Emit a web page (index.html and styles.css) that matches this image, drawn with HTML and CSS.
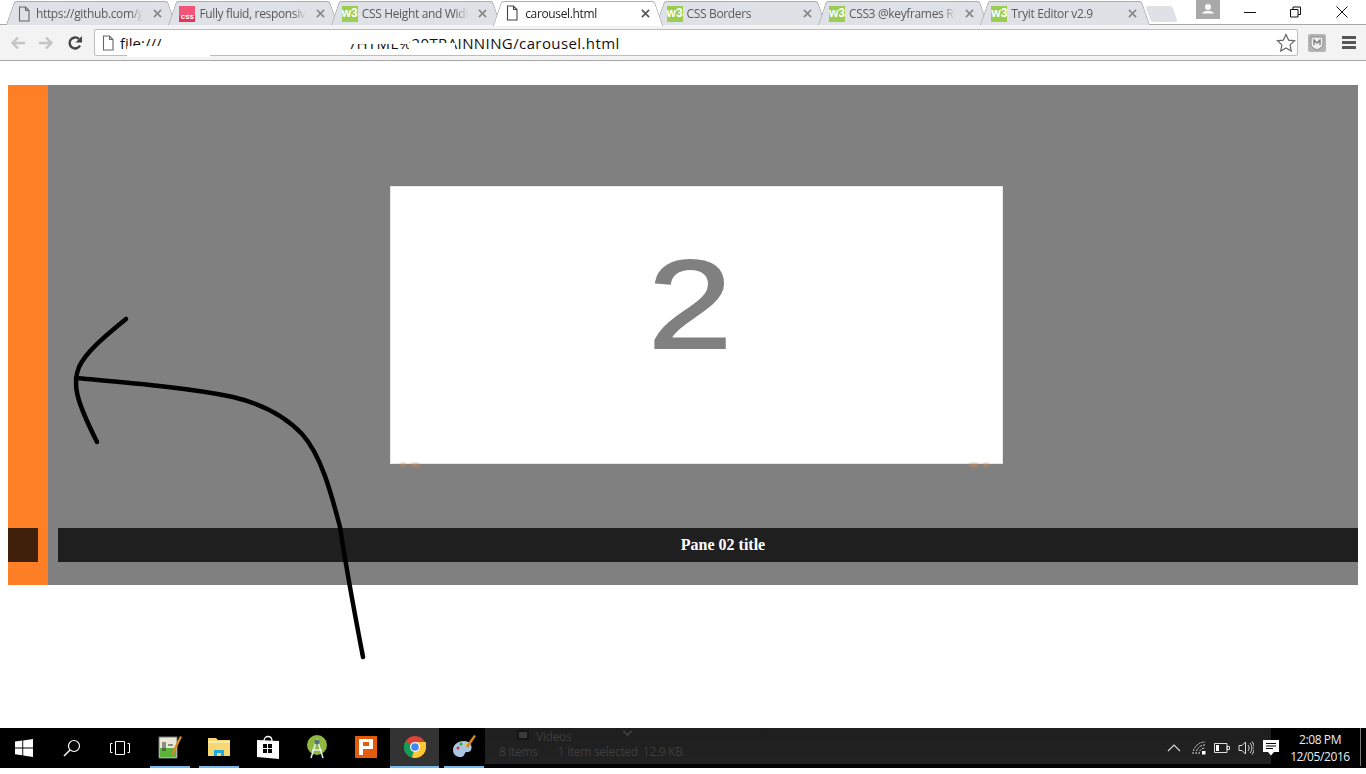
FILE: index.html
```html
<!DOCTYPE html>
<html lang="en">
<head>
<meta charset="utf-8">
<title>carousel.html</title>
<link rel="stylesheet" href="styles.css">
</head>
<body>
<svg class="defs" width="0" height="0" aria-hidden="true">
  <symbol id="file" viewBox="0 0 12 16"><path d="M1.500 1h6l3.500 3.500v10.500h-9.500zM7.500 1v3.500h3.500" fill="none" stroke="currentColor" stroke-width="1.100"/></symbol>
  <symbol id="close" viewBox="0 0 10 10"><path d="M1 1l8 8M9 1l-8 8" fill="none" stroke="currentColor" stroke-width="1.800"/></symbol>
</svg>
<div class="screen">
  <header class="tabstrip">
    <div class="tab"><svg class="fileicon"><use href="#file"/></svg><span class="tabtitle">https://github.com/g</span><svg class="tabclose"><use href="#close"/></svg></div>
    <div class="tab"><span class="favicon csslogo">css</span><span class="tabtitle">Fully fluid, responsive</span><svg class="tabclose"><use href="#close"/></svg></div>
    <div class="tab"><span class="favicon w3">w3</span><span class="tabtitle">CSS Height and Width</span><svg class="tabclose"><use href="#close"/></svg></div>
    <div class="tab active"><svg class="fileicon"><use href="#file"/></svg><span class="tabtitle">carousel.html</span><svg class="tabclose"><use href="#close"/></svg></div>
    <div class="tab"><span class="favicon w3">w3</span><span class="tabtitle">CSS Borders</span><svg class="tabclose"><use href="#close"/></svg></div>
    <div class="tab"><span class="favicon w3">w3</span><span class="tabtitle">CSS3 @keyframes Rule</span><svg class="tabclose"><use href="#close"/></svg></div>
    <div class="tab"><span class="favicon w3">w3</span><span class="tabtitle">Tryit Editor v2.9</span><svg class="tabclose"><use href="#close"/></svg></div>
    <div class="newtab"></div>
    <div class="profile"><svg viewBox="0 0 24 19" width="24" height="19"><circle cx="12" cy="7" r="3" fill="#fff"/><path d="M6 13.500c1-2 3.500-2.500 6-2.500s5 .5 6 2.500z" fill="#fff"/></svg></div>
    <div class="winbtns">
      <div class="winbtn"><svg viewBox="0 0 12 12" width="12" height="12"><path d="M0 6.500h12" stroke="#111" fill="none"/></svg></div>
      <div class="winbtn"><svg viewBox="0 0 12 12" width="12" height="12"><path d="M.5 3.500h7.500v7.500h-7.500zM3 3.500v-2.500h7.500v7.500h-2.500" stroke="#111" fill="none"/></svg></div>
      <div class="winbtn"><svg viewBox="0 0 12 12" width="12" height="12"><path d="M.5 .5l11 11M11.500 .5l-11 11" stroke="#111" fill="none"/></svg></div>
    </div>
  </header>
  <div class="toolbar">
    <svg class="navicon" viewBox="0 0 16 16"><path d="M15 8H3M8 2.500L2.500 8 8 13.500" fill="none" stroke="#c4c4c4" stroke-width="2.400"/></svg>
    <svg class="navicon" viewBox="0 0 16 16"><path d="M1 8h12M8 2.500L13.500 8 8 13.500" fill="none" stroke="#c4c4c4" stroke-width="2.400"/></svg>
    <svg class="navicon reload" viewBox="0 0 16 16"><path d="M13 10.500A5.500 5.500 0 1 1 12 4" fill="none" stroke="#444" stroke-width="2.400"/><path d="M15 1v6.500H8.500z" fill="#444"/></svg>
    <div class="omnibox">
      <svg class="omnifile"><use href="#file"/></svg>
      <span class="url">file:///</span><span class="url urlrest">/HTML%20TRAINNING/carousel.html</span>
      <svg class="star" viewBox="0 0 20 20"><path d="M10 1.500l2.600 5.600 6 .7-4.500 4.100 1.200 6.100-5.300-3-5.300 3 1.200-6.100-4.500-4.100 6-.7z" fill="#fff" stroke="#666" stroke-width="1.200"/></svg>
      <i class="blot blot-a"></i><i class="blot blot-b"></i><i class="blot blot-c"></i><i class="blot blot-d"></i>
    </div>
    <div class="ext"><svg viewBox="0 0 18 18" width="18" height="18"><rect width="18" height="18" rx="2" fill="#b4b4b4"/><path d="M3 3h12v7c0 3-3 4.500-6 6-3-1.500-6-3-6-6z" fill="#eee" stroke="#8a8a8a"/><path d="M6 11V6l3 3 3-3v5" fill="none" stroke="#777" stroke-width="1.300"/></svg></div>
    <div class="menu"><span></span><span></span><span></span></div>
  </div>
  <main class="page">
    <section class="stage">
      <div class="rail"><div class="railthumb"></div></div>
      <div class="pane">
        <div class="slide"><span class="digit">2</span></div>
        <div class="caption">Pane 02 title</div>
      </div>
    </section>
  </main>
  <footer class="taskbar">
    <div class="tb-sys"><svg viewBox="0 0 18 18" width="18" height="18"><path d="M0 2.600L7.300 1.600V8.400H0zM8.200 1.500L18 0V8.400H8.200zM0 9.400H7.300V16.300L0 15.300zM8.200 9.400H18V18L8.200 16.500z" fill="#fff"/></svg></div>
    <div class="tb-sys"><svg viewBox="0 0 18 18" width="18" height="18"><circle cx="11" cy="7" r="5.500" fill="none" stroke="#fff" stroke-width="1.200"/><path d="M7 11l-6 6" stroke="#fff" stroke-width="1.400"/></svg></div>
    <div class="tb-sys"><svg viewBox="0 0 20 14" width="20" height="14"><path d="M5.500 .5h9v13h-9zM2.500 2.500H.5v9h2M17.500 2.500h2v9h-2" fill="none" stroke="#fff"/></svg></div>
    <div class="tb-app run"><svg viewBox="0 0 24 24" width="24" height="24"><rect x="1" y="2" width="18" height="21" fill="#e8e8d8" stroke="#777"/><rect x="2" y="13" width="16" height="9" fill="#5cb33a"/><path d="M5 7v9M7 7v9M10 10h5" stroke="#333" stroke-width="1"/><path d="M22 1l2 1-9 18-2-1z" fill="#d98a1f"/></svg></div>
    <div class="tb-app run"><svg viewBox="0 0 22 20" width="22" height="20"><path d="M0 1h8l2 2h12v16H0z" fill="#f6d873"/><path d="M0 4h22v2H0z" fill="#fbe9a9"/><path d="M6 19v-6h10v6h-3v-3H9v3z" fill="#23a9e1"/></svg></div>
    <div class="tb-app"><svg viewBox="0 0 22 24" width="22" height="24"><path d="M7 6c0-6 8-6 8 0" fill="none" stroke="#fff" stroke-width="1.300"/><path d="M0 5l22 1v18L0 22z" fill="#fff"/><path d="M6 9h4v4H6zM11 9h4v4h-4zM6 14h4v4H6zM11 14h4v4h-4z" fill="#000"/></svg></div>
    <div class="tb-app"><svg viewBox="0 0 22 24" width="22" height="24"><circle cx="11" cy="10" r="10" fill="#8fb93e"/><path d="M11 4L5 23M11 4l6 19M6 15h10" stroke="#e9eef0" stroke-width="1.500" fill="none"/><circle cx="11" cy="7" r="2.500" fill="#55707d"/></svg></div>
    <div class="tb-app"><svg viewBox="0 0 22 22" width="22" height="22"><rect width="22" height="22" fill="#e35c0c"/><path d="M4 3h14v10H8v6H4zM8 6v4h6V6z" fill="#fff" fill-rule="evenodd"/></svg></div>
    <div class="tb-app run focus"><svg viewBox="0 0 22 22" width="22" height="22"><circle cx="11" cy="11" r="11" fill="#db4437"/><path d="M11 11L1.400 5.500A11 11 0 0 0 8 21.600z" fill="#0f9d58"/><path d="M11 11l-3 10.600A11 11 0 0 0 22 11V6H11z" fill="#fcc934"/><circle cx="11" cy="11" r="5" fill="#fff"/><circle cx="11" cy="11" r="3.800" fill="#4285f4"/></svg></div>
    <div class="tb-app run"><svg viewBox="0 0 24 24" width="24" height="24"><path d="M1 15c0-6 6-9 11-9 6 0 9 5 7 9-1 3-5 1-6 3s-1 4-5 4c-4 0-7-3-7-7z" fill="#a9c7e3"/><circle cx="6" cy="13" r="1.500" fill="#d33"/><circle cx="9" cy="9" r="1.500" fill="#3a3"/><circle cx="14" cy="9" r="1.500" fill="#ec3"/><path d="M22 0l2 1-8 12-2-2z" fill="#d98a1f"/></svg></div>
    <div class="ghost">
      <div class="ghost-top"><span class="ghost-icon"></span><span class="ghost-folder">Videos</span><span class="ghost-chev"></span></div>
      <div class="ghost-status"><span>8 items</span><span>1 item selected</span><span>12.9 KB</span></div>
      <div class="tray">
        <svg class="tray-chev" viewBox="0 0 14 8" width="14" height="8"><path d="M1 7l6-6 6 6" fill="none" stroke="#ddd" stroke-width="1.100"/></svg>
        <svg viewBox="0 0 14 14" width="14" height="14"><path d="M1 13A12 12 0 0 1 13 1M4 13a9 9 0 0 1 9-9M7 13a6 6 0 0 1 6-6" fill="none" stroke="#ddd" stroke-dasharray="2 1"/><rect x="10" y="10" width="3.500" height="3.500" fill="#fff"/></svg>
        <svg viewBox="0 0 16 10" width="16" height="10"><path d="M.5 .5h12.500v9H.5zM13 3.500h2.500v3H13z" fill="none" stroke="#ddd"/><rect x="2" y="2" width="3" height="6" fill="#fff"/></svg>
        <svg viewBox="0 0 16 14" width="16" height="14"><path d="M1 4.500h3L7.500 1v12L4 9.500H1zM10 4c1.500 2 1.500 4 0 6M12 2c2.500 3 2.500 7 0 10M14 .5c3 4 3 9 0 13" fill="none" stroke="#ddd"/></svg>
      </div>
    </div>
    <div class="notif"><svg viewBox="0 0 16 16" width="16" height="16"><path d="M0 0h16v12h-5l-3 3.500L5 12H0z" fill="#fff"/><path d="M3 3.500h10M3 6h10M3 8.500h7" stroke="#000"/></svg></div>
    <div class="clock"><span>2:08 PM</span><span>12/05/2016</span></div>
    <div class="showdesk"></div>
  </footer>
</div>
<svg class="scribble" viewBox="0 0 1366 774" width="1366" height="774" aria-hidden="true">
  <g class="smudges"><ellipse cx="403" cy="465" rx="3" ry="2"/><ellipse cx="415" cy="465" rx="5" ry="2"/><ellipse cx="974" cy="465" rx="5" ry="2"/><ellipse cx="986" cy="465" rx="3" ry="2"/></g>
  <path d="M126 319C104 337 86 352 79 367C72 384 76 400 97 442"/>
  <path d="M76 378C130 383 190 388 233 397C262 404 285 416 302 434C322 456 332 497 340 527C345 560 353 605 363 657"/>
</svg>
</body>
</html>
```
FILE: styles.css
```css
* { box-sizing: border-box; }
html, body { margin: 0; background: #fff; }
body { width: 1366px; height: 774px; overflow: hidden; position: relative; font-family: "Open Sans", "Noto Sans", sans-serif; }
.defs { position: absolute; }
.screen { height: 768px; display: flex; flex-direction: column; }

/* tab strip */
.tabstrip { height: 25px; display: flex; padding-left: 6px; border-bottom: 1px solid #a8a8a8; background: #fff; flex: none; }
.tab { width: 162.4px; height: 24px; margin-top: 1px; position: relative; display: flex; align-items: center; padding: 1px 6px 0 11px; color: #5a5a5a; font-size: 12px; letter-spacing: -.35px; }
.tab::before, .tab::after { content: ""; position: absolute; top: 0; bottom: 0; width: 60%; background: #dee1e6; border-top: 1px solid #a9adb3; z-index: 0; }
.tab::before { left: 4px; transform: skewX(-19deg); border-left: 1px solid #a9adb3; border-radius: 3px 0 0 0; }
.tab::after { right: -4px; transform: skewX(19deg); border-right: 1px solid #a9adb3; border-radius: 0 3px 0 0; }
.tab > * { position: relative; z-index: 1; }
.tab.active { color: #222; z-index: 2; margin-bottom: -1px; height: 25px; padding-bottom: 2px; }
.tab.active::before, .tab.active::after { background: #fff; }
.favicon { width: 16px; height: 16px; flex: none; margin-right: 4px; color: #fff; font: bold 12px/14px "Liberation Sans", sans-serif; letter-spacing: 0; text-align: center; overflow: hidden; }
.w3 { background: #9ccd53; }
.csslogo { background: linear-gradient(#f2547a 0 60%, #e8335f 60%); line-height: 22px; font-size: 8px; }
.fileicon { width: 12px; height: 16px; flex: none; margin: 0 6px 0 1px; color: #666; }
.tab.active .fileicon { color: #444; margin: 0 7px 0 2px; }
.tabtitle { flex: 1; min-width: 0; white-space: nowrap; overflow: hidden; mask-image: linear-gradient(to right, #000 88%, transparent); }
.tabclose { width: 9px; height: 9px; flex: none; margin-left: 10px; color: #888; }
.tab.active .tabclose { color: #555; }
.newtab { width: 27px; height: 16px; margin: 6px 0 0 5px; background: #dee1e6; transform: skewX(19deg); border-radius: 3px; flex: none; }
.profile { width: 24px; height: 19px; margin-left: 21px; background: #a9a9a9; flex: none; }
.winbtns { display: flex; margin-left: 7px; }
.winbtn { width: 46px; height: 24px; display: flex; align-items: center; justify-content: center; }

/* toolbar */
.toolbar { height: 36px; flex: none; display: flex; align-items: center; padding-left: 10px; background: #f3f3f3; border-bottom: 1px solid #a6a6a6; }
.navicon { width: 16px; height: 16px; margin-right: 12px; flex: none; }
.reload { margin: 0 11px 0 1px; }
.omnibox { width: 1204px; height: 27px; position: relative; display: flex; align-items: center; padding-left: 7px; background: #fff; border: 1px solid #bdbdbd; border-radius: 2px; }
.omnifile { width: 12px; height: 16px; color: #666; margin-right: 6px; flex: none; }
.url { font-size: 15px; color: #111; white-space: nowrap; }
.urlrest { margin-left: 189px; letter-spacing: .4px; }
.star { width: 20px; height: 20px; position: absolute; right: 1px; top: 3px; }
.blot { position: absolute; background: #fff; }
.blot-a { left: 32px; top: 16px; width: 83px; height: 11px; }
.blot-b { left: 68px; top: 0; width: 187px; height: 24px; }
.blot-c { left: 255px; top: 0; width: 59px; height: 14px; }
.blot-d { left: 314px; top: 13px; width: 46px; height: 11px; }
.ext { width: 18px; height: 18px; margin-left: 10px; flex: none; }
.menu { margin-left: 16px; width: 14px; display: flex; flex-direction: column; gap: 2px; flex: none; }
.menu span { height: 3px; background: #555; }

/* page */
.page { flex: 1; padding: 24px 8px 0; min-height: 0; }
.stage { width: 1350px; height: 500px; display: flex; background: #808080; }
.rail { width: 40px; background: #ff7f27; padding-top: 443px; flex: none; }
.railthumb { width: 30px; height: 34px; background: #40200b; }
.pane { flex: 1; padding-top: 101px; min-width: 0; }
.slide { width: 613px; height: 278px; margin-left: 342px; background: #fff; border: 1px solid #e8e8e8; display: flex; justify-content: center; padding: 55px 13px 0 0; }
.digit { font: 126px/1 "Liberation Sans", sans-serif; color: #808080; -webkit-text-stroke: 2px #808080; transform: scaleX(1.2); filter: blur(.5px); height: 126px; }
.caption { height: 34px; margin: 64px 0 0 10px; padding-left: 30px; background: #1f1f1f; color: #fff; font: bold 16px/34px "Liberation Serif", serif; text-align: center; }

/* taskbar */
.taskbar { height: 40px; flex: none; display: flex; background: #000; position: relative; color: #fff; }
.tb-sys { width: 48px; height: 40px; display: flex; align-items: center; justify-content: center; flex: none; }
.tb-app { width: 49px; height: 40px; display: flex; align-items: center; justify-content: center; flex: none; position: relative; padding-bottom: 2px; }
.tb-sys + .tb-app { margin-left: 1px; }
.tb-app.run::after { content: ""; position: absolute; left: 5px; right: 4px; bottom: 0; height: 2px; background: #76b9ed; }
.tb-app.focus { background: #333; }
.tb-app.focus::after { left: 0; right: 0; }
.ghost { width: 786px; margin-left: -3px; height: 36px; background: linear-gradient(#1e1e1e, #222); flex: none; position: relative; overflow: hidden; font: 12px/14px "Open Sans", sans-serif; letter-spacing: -.3px; color: #3d3d3d; padding-left: 14px; }
.ghost-top { height: 13px; display: flex; align-items: flex-start; padding-left: 18px; overflow: hidden; padding-top: 2px; }
.ghost-icon { width: 12px; height: 10px; background: #3a3a3a; border: 2px solid #151515; margin-right: 7px; }
.ghost-folder { width: 88px; }
.ghost-chev { width: 7px; height: 7px; border: solid #3a3a3a; border-width: 0 2px 2px 0; transform: rotate(45deg); margin-top: -2px; }
.ghost-status { display: flex; gap: 20px; margin-top: 4px; }
.ghost-status span + span + span { margin-left: -15px; }
.tray { position: absolute; top: 12px; right: 17px; height: 16px; display: flex; align-items: center; gap: 8px; }
.tray-chev { margin-right: 3px; }
.notif { width: 16px; height: 16px; flex: none; margin: 11px 0 0 -8px; position: relative; z-index: 1; }
.clock { width: 80px; display: flex; flex-direction: column; align-items: center; font: 12px/17px "Open Sans", sans-serif; letter-spacing: -.4px; padding-top: 3px; color: #eee; flex: none; margin-left: 1px; }
.showdesk { width: 1px; height: 38px; background: #777; flex: none; }

/* pen scribble drawn over the screenshot */
.scribble { position: absolute; left: 0; top: 0; pointer-events: none; }
.scribble path { fill: none; stroke: #000; stroke-width: 4.500; stroke-linecap: round; stroke-linejoin: round; }
.smudges { fill: #c98a58; opacity: .6; filter: blur(1px); }
```
